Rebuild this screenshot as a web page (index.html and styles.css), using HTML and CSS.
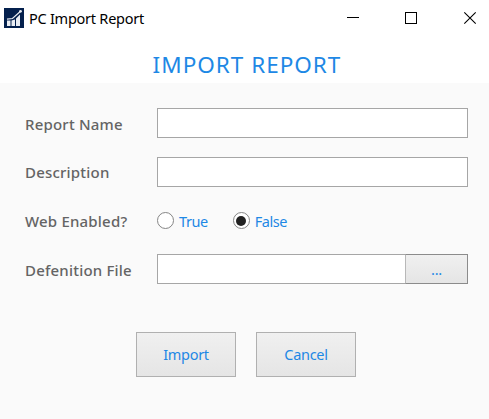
FILE: index.html
```html
<!DOCTYPE html>
<html lang="en">
<head>
<meta charset="utf-8">
<title>PC Import Report</title>
<link rel="stylesheet" href="styles.css">
</head>
<body>
<div class="window">
  <header class="titlebar">
    <svg class="app-icon" width="20" height="20" viewBox="0 0 20 20">
      <rect width="20" height="20" fill="#04204d"/>
      <path d="M3 12.5h3.5V18H3zM7.5 12.5 11 11.5V18H7.5zM12 10.5l4-4V18h-4z" fill="#e9edf3"/>
      <path d="M3 11.2 8.5 10.5 16.3 3.5" fill="none" stroke="#e9edf3" stroke-width="1.2"/>
      <circle cx="16.5" cy="3.3" r="1.4" fill="#e9edf3"/>
    </svg>
    <span class="caption">PC Import Report</span>
    <svg class="controls" width="131" height="14" viewBox="0 0 131 14" fill="none" stroke="#000">
      <path d="M0 6.5h12"/>
      <rect x="58.5" y="1.5" width="11" height="11"/>
      <path d="m117.3 1.3 11.4 11.4M128.7 1.3l-11.4 11.4" stroke-width="1.1"/>
    </svg>
  </header>
  <h1 class="heading"><span class="heading-text">IMPORT REPORT</span></h1>
  <main class="form">
    <div class="row">
      <label class="label name" for="name">Report Name</label>
      <input class="field" id="name" type="text">
    </div>
    <div class="row">
      <label class="label description" for="description">Description</label>
      <input class="field" id="description" type="text">
    </div>
    <div class="row">
      <span class="label web">Web Enabled?</span>
      <div class="options">
        <label class="option true"><span class="radio"></span><span class="option-text">True</span></label>
        <label class="option false"><span class="radio checked"></span><span class="option-text">False</span></label>
      </div>
    </div>
    <div class="row">
      <label class="label file" for="file">Defenition File</label>
      <input class="field path" id="file" type="text">
      <button class="browse">...</button>
    </div>
    <div class="actions">
      <button class="action import">Import</button>
      <button class="action cancel">Cancel</button>
    </div>
  </main>
</div>
</body>
</html>
```

FILE: styles.css
```css
* { box-sizing: border-box; }
body {
  margin: 0;
  background: #fafafa;
  font-family: "Noto Sans", "Open Sans", sans-serif;
}
.window { width: 489px; height: 419px; overflow: hidden; }
.titlebar {
  display: flex;
  align-items: center;
  height: 36px;
  padding: 0 11px 0 4px;
  background: #fff;
}
.app-icon { flex: none; }
.caption {
  margin-left: 5px;
  font-size: 14.5px;
  letter-spacing: -0.25px;
  color: #000;
  white-space: nowrap;
}
.controls { margin-left: auto; }
.heading {
  display: flex;
  justify-content: center;
  height: 47px;
  margin: 0;
  padding-left: 5px;
  background: #fff;
  color: #1e88e5;
  font-size: 22.5px;
  font-weight: 400;
  line-height: 58px;
  letter-spacing: 1px;
  white-space: nowrap;
}
.form { padding: 25px 21px 0 25px; }
.row {
  display: flex;
  align-items: center;
  height: 30px;
  margin-bottom: 19px;
}
.row:nth-child(3) { margin-bottom: 18px; }
.label {
  width: 132px;
  padding-top: 1px;
  color: #646464;
  font-size: 15px;
  font-weight: 500;
  line-height: 20px;
  letter-spacing: 0.2px;
  white-space: nowrap;
}
.description, .web { padding: 0 0 1px; }
.field {
  flex: 1;
  min-width: 0;
  height: 30px;
  border: 1px solid #a6a6a6;
  border-radius: 0;
  background: #fff;
  outline: none;
}
.path { border-right: 0; }
.browse, .action {
  padding: 0;
  border: 1px solid #acacac;
  border-radius: 0;
  background: linear-gradient(#f0f0f0, #e5e5e5);
  color: #1e88e5;
  font-family: inherit;
  font-size: 14.5px;
  letter-spacing: -0.3px;
}
.browse {
  width: 63px;
  height: 30px;
  border-color: #8b8b8b;
  border-left-color: #b8b8b8;
}
.options { display: flex; gap: 25px; margin-top: -1px; }
.option {
  display: flex;
  align-items: center;
  height: 19px;
  color: #1e88e5;
  font-size: 14.5px;
  letter-spacing: -0.45px;
}
.option-text { margin: 1px 0 0 5px; }
.radio {
  display: grid;
  place-items: center;
  width: 17px;
  height: 17px;
  border: 1px solid #858585;
  border-radius: 50%;
  background: #fff;
}
.checked::after {
  content: "";
  width: 10px;
  height: 10px;
  border-radius: 50%;
  background: #212121;
}
.actions {
  display: flex;
  gap: 20px;
  margin: 48px 0 0 111px;
}
.action {
  width: 100px;
  height: 45px;
  padding-bottom: 1px;
  border-color: #b0b0b0;
}
```
